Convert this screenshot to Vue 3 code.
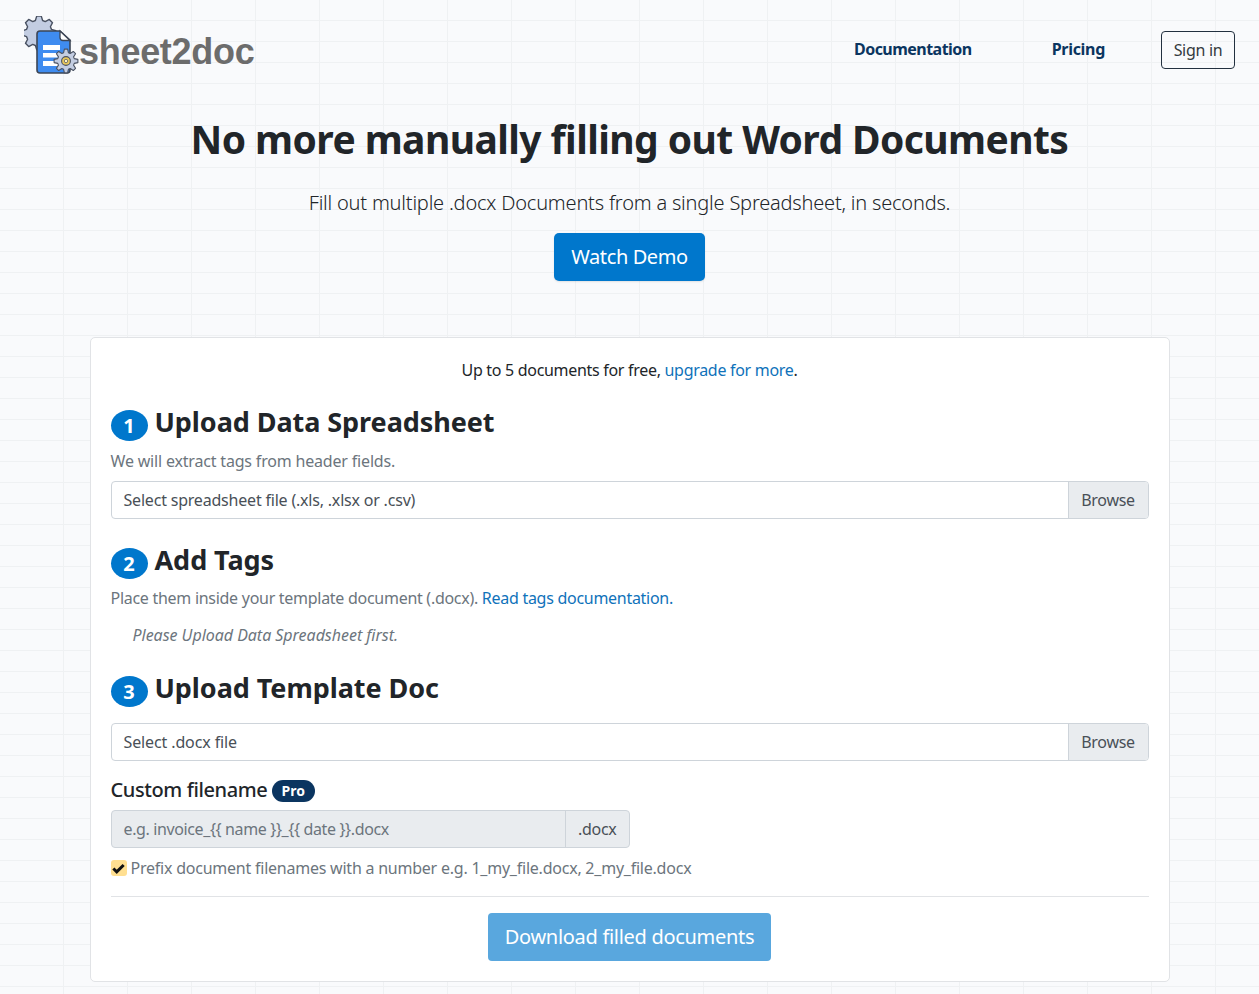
<script setup>
const gearPath = (cx, cy, outer, inner, teeth) => {
  const step = (Math.PI * 2) / teeth
  const pts = []
  for (let i = 0; i < teeth; i++) {
    const a = i * step - Math.PI / 2
    const at = (r, t) => `${(cx + r * Math.cos(a + t * step)).toFixed(2)} ${(cy + r * Math.sin(a + t * step)).toFixed(2)}`
    pts.push(at(inner, -0.36), at(outer, -0.17), at(outer, 0.17), at(inner, 0.36))
  }
  return 'M' + pts.join('L') + 'Z'
}

const bigGear = gearPath(15, 17, 17, 13, 8)
const smallGear = gearPath(42, 45, 12, 8.6, 8)
const tagsHint = 'Please Upload Data Spreadsheet first.'
</script>

<template>
  <div class="page">
    <nav class="navbar">
      <a class="brand">
        <svg class="logo" viewBox="0 0 56 60" width="56" height="60">
          <path class="gear-big" :d="bigGear" />
          <path class="doc" d="M16 15H36l10 9v30a3 3 0 0 1-3 3H16a3 3 0 0 1-3-3V18a3 3 0 0 1 3-3z" />
          <path class="fold" d="M36 15l10 9.500h-7a3 3 0 0 1-3-3z" />
          <rect class="row" x="19" y="29" width="17" height="5" />
          <rect class="row" x="19" y="37" width="17" height="4.500" />
          <rect class="row" x="19" y="45" width="17" height="5" />
          <path class="gear-small" :d="smallGear" />
          <circle class="hub" cx="42" cy="45" r="4.400" />
          <circle class="hub-dot" cx="42" cy="45" r="1.700" />
        </svg>
        <span class="brand-text">sheet2doc</span>
      </a>
      <div class="nav-links">
        <a class="nav-link docs">Documentation</a>
        <a class="nav-link pricing">Pricing</a>
        <a class="signin">Sign in</a>
      </div>
    </nav>

    <header class="hero">
      <h1>No more manually filling out Word Documents</h1>
      <p class="lead">Fill out multiple .docx Documents from a single Spreadsheet, in seconds.</p>
      <a class="btn-primary">Watch Demo</a>
    </header>

    <main class="card">
      <p class="quota">Up to 5 documents for free, <a class="link">upgrade for more</a>.</p>

      <h2 class="step"><span class="num">1</span>Upload Data Spreadsheet</h2>
      <p class="muted first">We will extract tags from header fields.</p>
      <div class="file-input">
        <span class="file-label">Select spreadsheet file (.xls, .xlsx or .csv)</span>
        <span class="browse">Browse</span>
      </div>

      <h2 class="step step-2"><span class="num">2</span>Add Tags</h2>
      <p class="muted second">Place them inside your template document (.docx). <a class="link">Read tags documentation.</a></p>
      <p class="hint">{{ tagsHint }}</p>

      <h2 class="step step-3"><span class="num">3</span>Upload Template Doc</h2>
      <div class="file-input template">
        <span class="file-label">Select .docx file</span>
        <span class="browse">Browse</span>
      </div>

      <div class="custom-title">Custom filename <span class="pro">Pro</span></div>
      <div class="filename-group">
        <span class="filename-input">e.g. invoice_{{ '{' }}{ name }}_{{ '{' }}{ date }}.docx</span>
        <span class="filename-ext">.docx</span>
      </div>
      <label class="prefix">
        <span class="check">
          <svg viewBox="0 0 16 16" width="15" height="15"><path d="M2.500 8l3.600 3.600 7.400-7.400" fill="none" stroke="#111" stroke-width="3.200" /></svg>
        </span>
        Prefix document filenames with a number e.g. 1_my_file.docx, 2_my_file.docx
      </label>
      <hr class="divider" />
      <div class="actions">
        <a class="btn-download">Download filled documents</a>
      </div>
    </main>
  </div>
</template>

<style>
html, body {
  margin: 0;
  background: #f9fafc;
}
</style>

<style scoped>
.page {
  height: 994px;
  overflow: hidden;
  box-sizing: border-box;
  font-family: "Noto Sans", "Open Sans", sans-serif;
  font-size: 16px;
  letter-spacing: -0.3px;
  color: #212529;
  background-color: #f9fafc;
  background-image:
    linear-gradient(to right, #eff1f3 1px, transparent 1px),
    linear-gradient(to bottom, #eff1f3 1px, transparent 1px);
  background-size: 64px 21px;
  background-position: -1px -1px;
}

.navbar {
  display: flex;
  justify-content: space-between;
  align-items: flex-start;
  height: 100px;
  box-sizing: border-box;
  padding: 16px 24px 0 24px;
}

.brand {
  display: flex;
  align-items: center;
  height: 60px;
}

.logo {
  flex-shrink: 0;
}

.gear-big {
  fill: #c3cde2;
  stroke: #4a5262;
  stroke-width: 1.400;
  stroke-linejoin: round;
}

.doc {
  fill: #3f8cf0;
  stroke: #3d4656;
  stroke-width: 1.600;
}

.fold {
  fill: #fff;
  stroke: #3d4656;
  stroke-width: 1.300;
}

.row {
  fill: #fff;
}

.gear-small {
  fill: #c3cde2;
  stroke: #4a5262;
  stroke-width: 1.100;
  stroke-linejoin: round;
}

.hub {
  fill: #e8c75a;
  stroke: #4a5262;
  stroke-width: 1.100;
}

.hub-dot {
  fill: #fff3c4;
  stroke: #4a5262;
  stroke-width: 0.700;
}

.brand-text {
  margin-left: -1px;
  font-family: "Liberation Sans", sans-serif;
  font-weight: 700;
  font-size: 36px;
  letter-spacing: -0.3px;
  color: #6c6c6c;
  position: relative;
  top: 6px;
}

.nav-links {
  display: flex;
  align-items: flex-start;
  padding-top: 15px;
}

.nav-link {
  font-weight: 700;
  line-height: 36px;
  color: #0b3560;
}

.docs {
  margin-right: 80px;
  letter-spacing: -0.53px;
}

.pricing {
  margin-right: 56px;
}

.signin {
  box-sizing: border-box;
  height: 38px;
  width: 74px;
  line-height: 36px;
  text-align: center;
  border: 1px solid #22303f;
  border-radius: 4px;
  color: #343a40;
}

.hero {
  text-align: center;
}

.hero h1 {
  margin: 13px 0 0;
  font-size: 39px;
  line-height: 52px;
  font-weight: 700;
  letter-spacing: -0.58px;
}

.lead {
  margin: 23px 0 0;
  font-size: 20px;
  line-height: 30px;
  font-weight: 300;
  letter-spacing: -0.2px;
}

.btn-primary {
  display: inline-block;
  margin-top: 15px;
  height: 48px;
  width: 151px;
  line-height: 48px;
  text-align: center;
  font-size: 20px;
  letter-spacing: -0.4px;
  color: #fff;
  background: #0077cc;
  border-radius: 5px;
  box-shadow: 0 1px 2px rgba(0, 0, 0, 0.1);
}

.card {
  box-sizing: border-box;
  width: 1080px;
  height: 645px;
  margin: 56px auto 0;
  padding: 20px;
  background: #fff;
  border: 1px solid #e1e3e6;
  border-radius: 5px;
}

.quota {
  margin: 0;
  text-align: center;
  line-height: 24px;
}

.link {
  color: #0f72ba;
}

.step {
  display: flex;
  align-items: center;
  margin: 22px 0 0;
  font-size: 27px;
  line-height: 34px;
  font-weight: 700;
  letter-spacing: -0.06px;
}

.step-2 {
  margin-top: 23px;
}

.step-3 {
  margin-top: 23px;
}

.num {
  display: inline-block;
  width: 37px;
  height: 31px;
  margin: 6px 7px -2px 0;
  line-height: 31px;
  text-align: center;
  font-size: 20px;
  font-weight: 700;
  letter-spacing: 0;
  color: #fff;
  background: #0077cc;
  border-radius: 50%;
}

.muted {
  margin: 8px 0 0;
  line-height: 24px;
  color: #6c757d;
}

.muted.first {
  margin-top: 10px;
  letter-spacing: -0.18px;
}

.muted.second {
  margin-top: 9px;
  letter-spacing: -0.28px;
}

.hint {
  margin: 13px 0 0 22px;
  line-height: 24px;
  font-style: italic;
  letter-spacing: -0.03px;
  color: #6c757d;
}

.file-input {
  display: flex;
  justify-content: space-between;
  height: 38px;
  box-sizing: border-box;
  margin-top: 8px;
  border: 1px solid #ced4da;
  border-radius: 4px;
  background: #fff;
  line-height: 36px;
  letter-spacing: -0.2px;
  color: #495057;
}

.file-input.template {
  margin-top: 18px;
  letter-spacing: -0.12px;
}

.file-label {
  padding-left: 12px;
}

.browse {
  box-sizing: border-box;
  width: 80px;
  text-align: center;
  background: #e9ecef;
  border-left: 1px solid #ced4da;
  border-radius: 0 3px 3px 0;
  letter-spacing: -0.3px;
}

.custom-title {
  height: 26px;
  margin-top: 16px;
  font-size: 20px;
  line-height: 26px;
  font-weight: 500;
  letter-spacing: -0.4px;
}

.pro {
  display: inline-block;
  padding: 0 9.500px;
  font-size: 14px;
  line-height: 22px;
  font-weight: 700;
  letter-spacing: 0;
  vertical-align: 1px;
  color: #fff;
  background: #0b3560;
  border-radius: 11px;
}

.filename-group {
  display: flex;
  width: 519px;
  height: 38px;
  margin-top: 7px;
  box-sizing: border-box;
  border: 1px solid #ced4da;
  border-radius: 4px;
  line-height: 36px;
  color: #495057;
  background: #e9ecef;
}

.filename-input {
  flex: 1;
  padding-left: 12px;
  letter-spacing: -0.38px;
  color: #6c757d;
}

.filename-ext {
  padding: 0 12px;
  border-left: 1px solid #ced4da;
}

.prefix {
  display: flex;
  align-items: center;
  margin-top: 8px;
  line-height: 24px;
  letter-spacing: -0.23px;
  color: #6c757d;
}

.check {
  display: flex;
  align-items: center;
  justify-content: center;
  width: 16px;
  height: 16px;
  margin-right: 4px;
  background: #ffdf91;
  border-radius: 3px;
}

.divider {
  margin: 16px 0;
  border: 0;
  border-top: 1px solid #e1e3e6;
}

.actions {
  text-align: center;
}

.btn-download {
  display: inline-block;
  height: 48px;
  width: 283px;
  line-height: 48px;
  text-align: center;
  font-size: 20px;
  color: #fff;
  background: #59a7de;
  border-radius: 4px;
}
</style>
